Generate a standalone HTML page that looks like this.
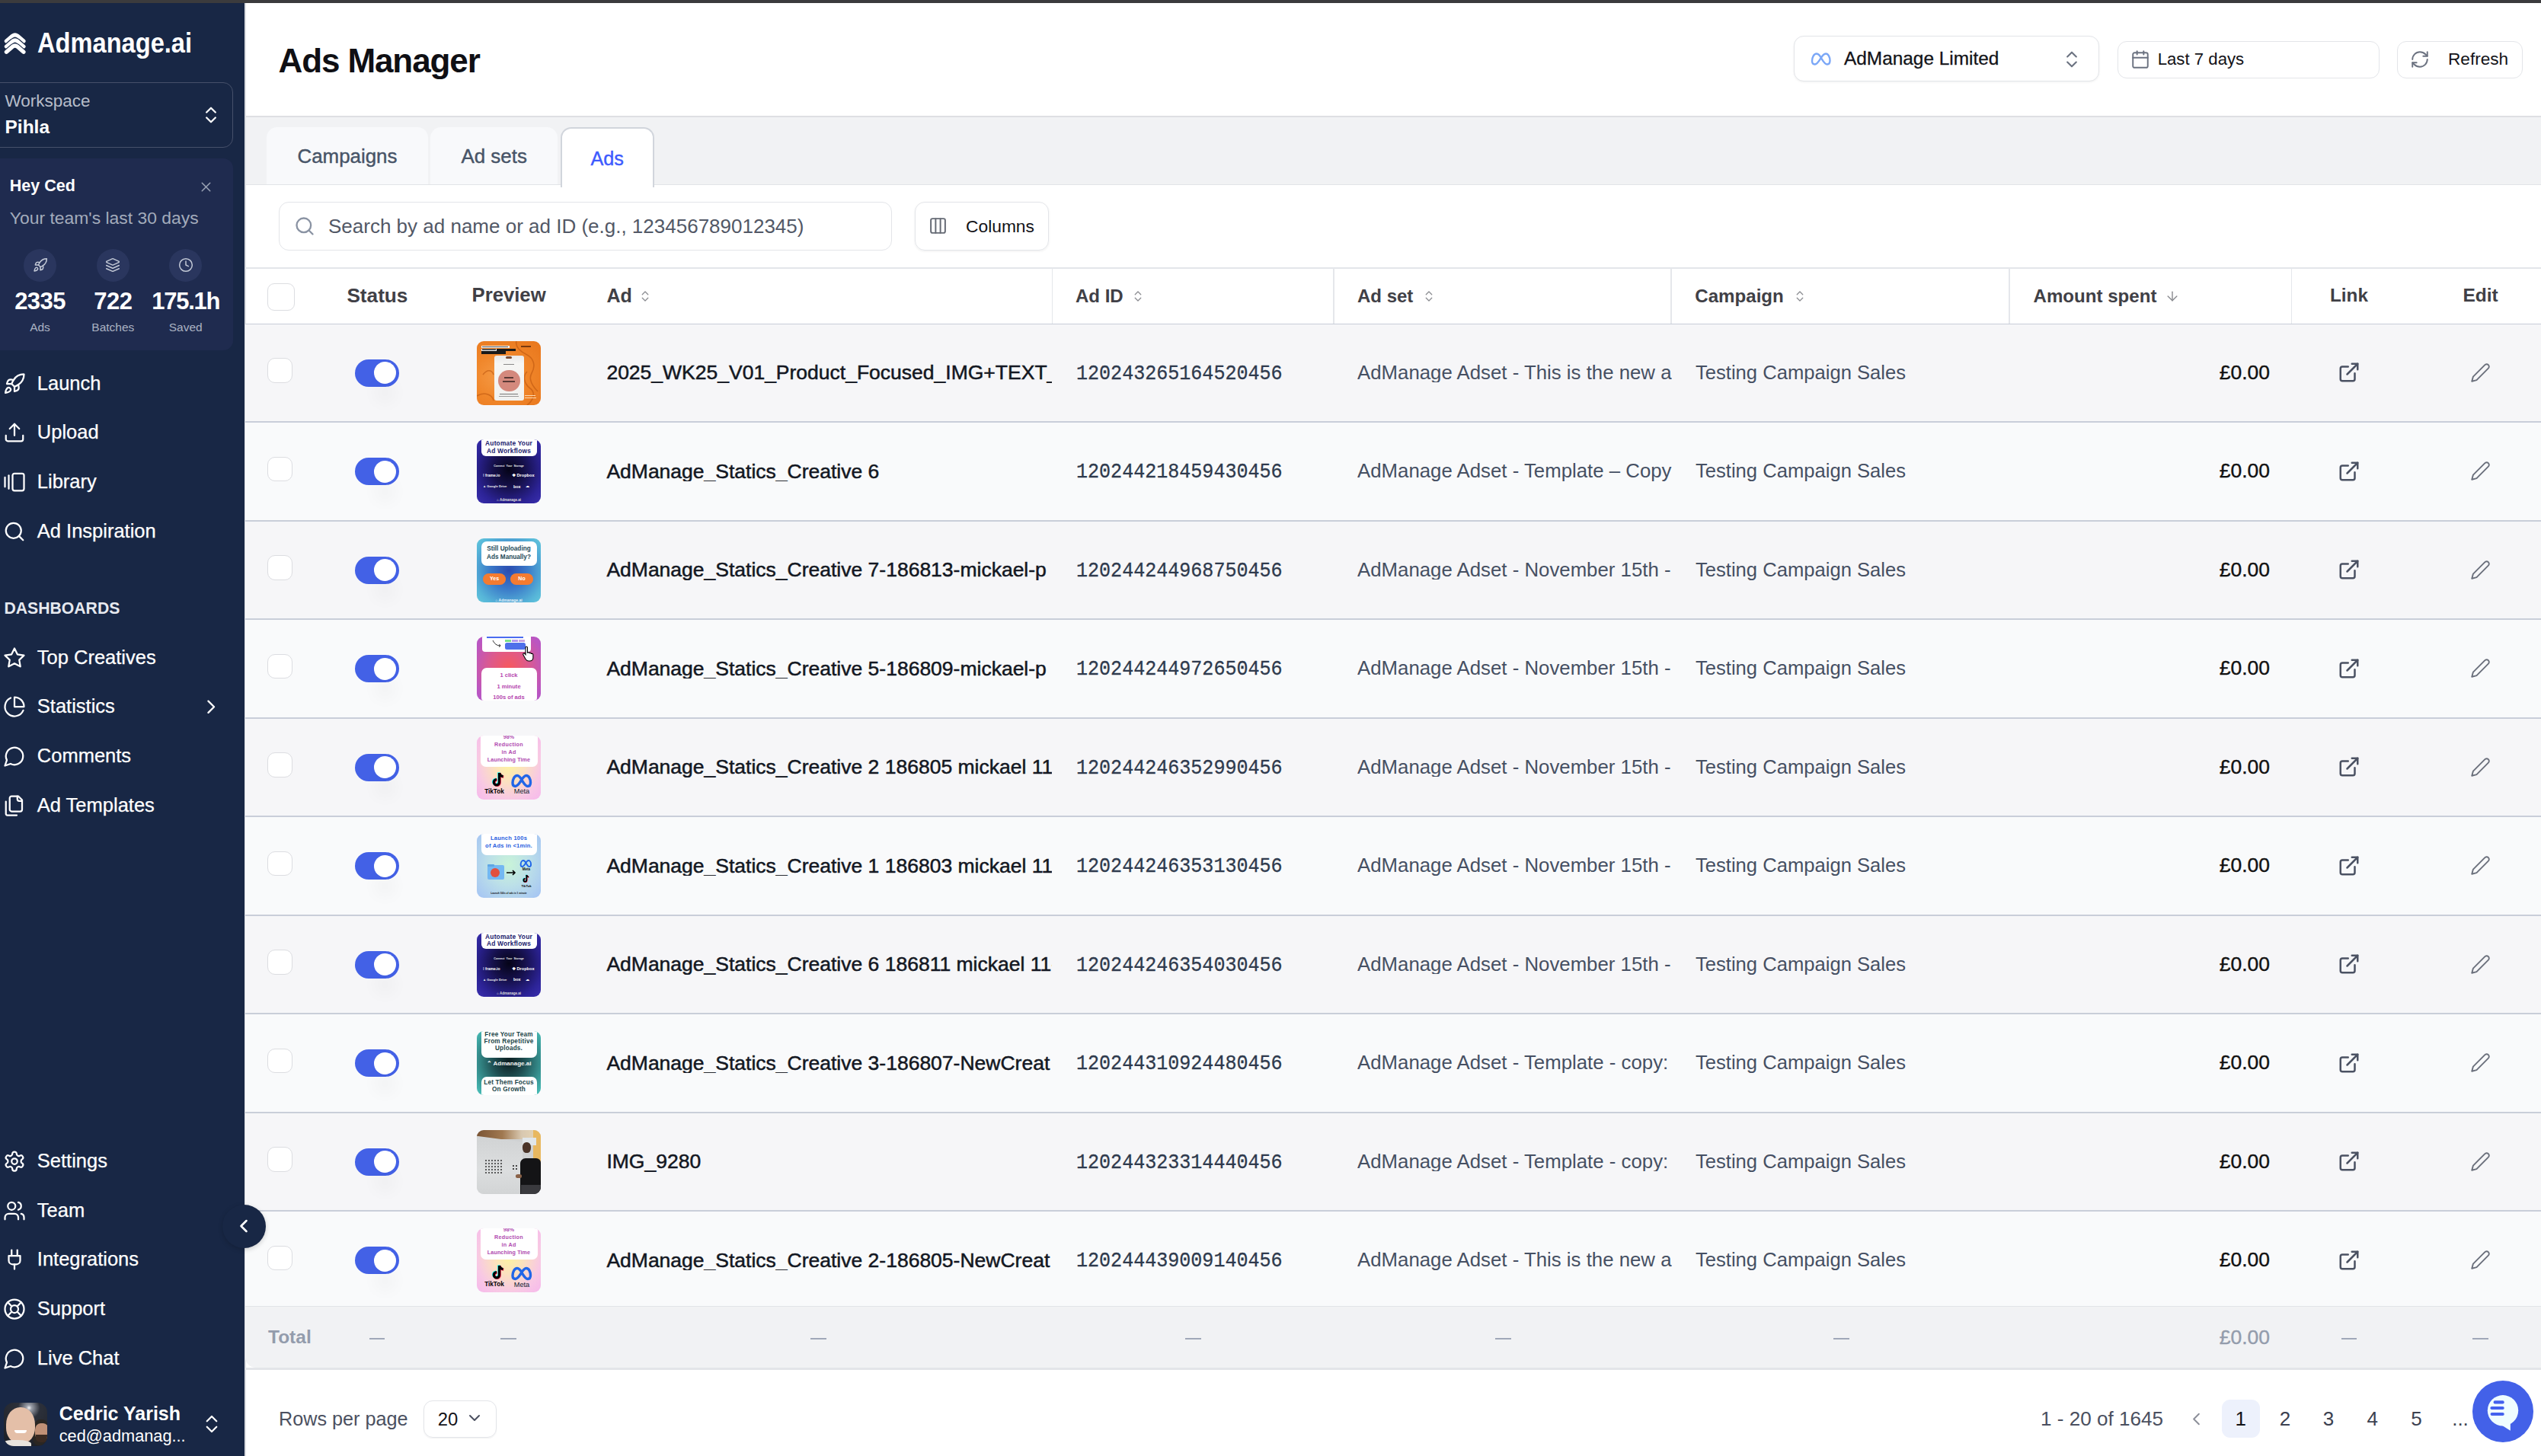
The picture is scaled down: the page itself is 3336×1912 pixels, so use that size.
<!DOCTYPE html><html><head><meta charset="utf-8"><style>
html,body{margin:0;padding:0;}
body{width:3336px;height:1912px;position:relative;overflow:hidden;background:#fff;font-family:'Liberation Sans', sans-serif;}
.t{position:absolute;line-height:1;white-space:nowrap;}
body{-webkit-font-smoothing:antialiased;}
svg{display:block}
</style></head><body>
<div style="position:absolute;left:0px;top:0px;width:3336px;height:4px;background:#3b3b3d;"></div>
<div style="position:absolute;left:0px;top:4px;width:321px;height:1908px;background:#182745;"></div>
<div style="position:absolute;left:321px;top:4px;width:2px;height:1908px;background:#dcdee2;"></div>
<svg style="position:absolute;left:5px;top:41px" width="32" height="34" viewBox="0 0 32 34" fill="none" stroke-linecap="round" stroke-linejoin="round"><path d="M3.4 13.0 L11.5 6.0 Q14.7 3.6 17.9 6.0 L26 13.0" stroke="#fff" stroke-width="5.2"/><path d="M3.4 20.1 L11.5 13.1 Q14.7 10.7 17.9 13.1 L26 20.1" stroke="#182745" stroke-width="7.4"/><path d="M3.4 20.1 L11.5 13.1 Q14.7 10.7 17.9 13.1 L26 20.1" stroke="#fff" stroke-width="5.2"/><path d="M3.4 27.2 L11.5 20.2 Q14.7 17.8 17.9 20.2 L26 27.2" stroke="#182745" stroke-width="7.4"/><path d="M3.4 27.2 L11.5 20.2 Q14.7 17.8 17.9 20.2 L26 27.2" stroke="#fff" stroke-width="5.2"/></svg>
<div class="t" style="left:48.7px;top:38.3px;font-size:37.5px;color:#fff;font-weight:700;font-family:'Liberation Sans', sans-serif;transform:scaleX(0.87);transform-origin:0 0;letter-spacing:0px;">Admanage.ai</div>
<div style="position:absolute;left:-20px;top:108px;width:326px;height:86px;border:1.5px solid #46506a;border-radius:13px;box-sizing:border-box;"></div>
<div class="t" style="left:6.5px;top:122.0px;font-size:22.5px;color:#b7bdc9;font-weight:400;font-family:'Liberation Sans', sans-serif;">Workspace</div>
<div class="t" style="left:6.5px;top:154.8px;font-size:24.5px;color:#fff;font-weight:700;font-family:'Liberation Sans', sans-serif;">Pihla</div>
<svg style="position:absolute;left:262.5px;top:136.5px;" width="28" height="28" viewBox="0 0 24 24" fill="none" stroke="#fff" stroke-width="1.9" stroke-linecap="round" stroke-linejoin="round"><path d="m7 15 5 5 5-5"/><path d="m7 9 5-5 5 5"/></svg>
<div style="position:absolute;left:-20px;top:208px;width:326px;height:252px;background:#1f2b4f;border-radius:13px;"></div>
<div class="t" style="left:12.8px;top:234.2px;font-size:21.5px;color:#fff;font-weight:700;font-family:'Liberation Sans', sans-serif;">Hey Ced</div>
<svg style="position:absolute;left:259.5px;top:235px;" width="21" height="21" viewBox="0 0 24 24" fill="none" stroke="#9aa3b5" stroke-width="1.7" stroke-linecap="round" stroke-linejoin="round"><path d="M18 6 6 18"/><path d="m6 6 12 12"/></svg>
<div class="t" style="left:12.8px;top:274.6px;font-size:22.9px;color:#a3abbb;font-weight:400;font-family:'Liberation Sans', sans-serif;">Your team's last 30 days</div>
<div style="position:absolute;left:31.0px;top:326.5px;width:43px;height:43px;background:#2a365e;border-radius:50%;"></div>
<svg style="position:absolute;left:42.5px;top:338px;" width="20" height="20" viewBox="0 0 24 24" fill="none" stroke="#c3c9d6" stroke-width="1.8" stroke-linecap="round" stroke-linejoin="round"><path d="M4.5 16.5c-1.5 1.26-2 5-2 5s3.74-.5 5-2c.71-.84.7-2.13-.09-2.91a2.18 2.18 0 0 0-2.91-.09z"/><path d="m12 15-3-3a22 22 0 0 1 2-3.95A12.88 12.88 0 0 1 22 2c0 2.72-.78 7.5-6 11a22.350 22.350 0 0 1-4 2z"/><path d="M9 12H4s.55-3.03 2-4c1.62-1.08 5 0 5 0"/><path d="M12 15v5s3.030-.55 4-2c1.08-1.62 0-5 0-5"/></svg>
<div class="t" style="left:-147.5px;width:400px;text-align:center;top:379.8px;font-size:31px;color:#fff;font-weight:700;font-family:'Liberation Sans', sans-serif;letter-spacing:-0.6px;">2335</div>
<div class="t" style="left:-147.5px;width:400px;text-align:center;top:421.6px;font-size:15.5px;color:#aab2c2;font-weight:400;font-family:'Liberation Sans', sans-serif;">Ads</div>
<div style="position:absolute;left:126.80000000000001px;top:326.5px;width:43px;height:43px;background:#2a365e;border-radius:50%;"></div>
<svg style="position:absolute;left:138.3px;top:338px;" width="20" height="20" viewBox="0 0 24 24" fill="none" stroke="#c3c9d6" stroke-width="1.8" stroke-linecap="round" stroke-linejoin="round"><path d="m12.83 2.18a2 2 0 0 0-1.66 0L2.6 6.08a1 1 0 0 0 0 1.83l8.58 3.91a2 2 0 0 0 1.66 0l8.58-3.9a1 1 0 0 0 0-1.83Z"/><path d="m22 17.65-9.17 4.16a2 2 0 0 1-1.66 0L2 17.65"/><path d="m22 12.65-9.17 4.16a2 2 0 0 1-1.66 0L2 12.65"/></svg>
<div class="t" style="left:-51.7px;width:400px;text-align:center;top:379.8px;font-size:31px;color:#fff;font-weight:700;font-family:'Liberation Sans', sans-serif;letter-spacing:-0.6px;">722</div>
<div class="t" style="left:-51.7px;width:400px;text-align:center;top:421.6px;font-size:15.5px;color:#aab2c2;font-weight:400;font-family:'Liberation Sans', sans-serif;">Batches</div>
<div style="position:absolute;left:222.2px;top:326.5px;width:43px;height:43px;background:#2a365e;border-radius:50%;"></div>
<svg style="position:absolute;left:233.7px;top:338px;" width="20" height="20" viewBox="0 0 24 24" fill="none" stroke="#c3c9d6" stroke-width="1.8" stroke-linecap="round" stroke-linejoin="round"><circle cx="12" cy="12" r="10"/><polyline points="12 6 12 12 16 14"/></svg>
<div class="t" style="left:43.7px;width:400px;text-align:center;top:379.8px;font-size:31px;color:#fff;font-weight:700;font-family:'Liberation Sans', sans-serif;letter-spacing:-1.3px;">175.1h</div>
<div class="t" style="left:43.7px;width:400px;text-align:center;top:421.6px;font-size:15.5px;color:#aab2c2;font-weight:400;font-family:'Liberation Sans', sans-serif;">Saved</div>
<svg style="position:absolute;left:4px;top:489px;" width="30" height="30" viewBox="0 0 24 24" fill="none" stroke="#fff" stroke-width="1.8" stroke-linecap="round" stroke-linejoin="round"><path d="M4.5 16.5c-1.5 1.26-2 5-2 5s3.74-.5 5-2c.71-.84.7-2.13-.09-2.91a2.18 2.18 0 0 0-2.91-.09z"/><path d="m12 15-3-3a22 22 0 0 1 2-3.95A12.88 12.88 0 0 1 22 2c0 2.72-.78 7.5-6 11a22.350 22.350 0 0 1-4 2z"/><path d="M9 12H4s.55-3.03 2-4c1.62-1.08 5 0 5 0"/><path d="M12 15v5s3.030-.55 4-2c1.08-1.62 0-5 0-5"/></svg>
<div class="t" style="left:48.8px;top:491.4px;font-size:25.5px;color:#fff;font-weight:400;font-family:'Liberation Sans', sans-serif;-webkit-text-stroke:0.25px #fff;">Launch</div>
<svg style="position:absolute;left:4px;top:553px;" width="30" height="30" viewBox="0 0 24 24" fill="none" stroke="#fff" stroke-width="1.8" stroke-linecap="round" stroke-linejoin="round"><path d="M21 15v4a2 2 0 0 1-2 2H5a2 2 0 0 1-2-2v-4"/><polyline points="17 8 12 3 7 8"/><line x1="12" y1="3" x2="12" y2="15"/></svg>
<div class="t" style="left:48.8px;top:555.4px;font-size:25.5px;color:#fff;font-weight:400;font-family:'Liberation Sans', sans-serif;-webkit-text-stroke:0.25px #fff;">Upload</div>
<svg style="position:absolute;left:4px;top:618px;" width="30" height="30" viewBox="0 0 24 24" fill="none" stroke="#fff" stroke-width="1.8" stroke-linecap="round" stroke-linejoin="round"><path d="M2 7v10"/><path d="M6 5v14"/><rect x="10" y="3" width="12" height="18" rx="2"/></svg>
<div class="t" style="left:48.8px;top:620.4px;font-size:25.5px;color:#fff;font-weight:400;font-family:'Liberation Sans', sans-serif;-webkit-text-stroke:0.25px #fff;">Library</div>
<svg style="position:absolute;left:4px;top:683px;" width="30" height="30" viewBox="0 0 24 24" fill="none" stroke="#fff" stroke-width="1.8" stroke-linecap="round" stroke-linejoin="round"><circle cx="11" cy="11" r="8"/><path d="m21 21-4.3-4.3"/></svg>
<div class="t" style="left:48.8px;top:685.4px;font-size:25.5px;color:#fff;font-weight:400;font-family:'Liberation Sans', sans-serif;-webkit-text-stroke:0.25px #fff;">Ad Inspiration</div>
<svg style="position:absolute;left:4px;top:848.5px;" width="30" height="30" viewBox="0 0 24 24" fill="none" stroke="#fff" stroke-width="1.8" stroke-linecap="round" stroke-linejoin="round"><polygon points="12 2 15.09 8.26 22 9.27 17 14.14 18.18 21.02 12 17.77 5.82 21.02 7 14.14 2 9.27 8.91 8.26 12 2"/></svg>
<div class="t" style="left:48.8px;top:850.9px;font-size:25.5px;color:#fff;font-weight:400;font-family:'Liberation Sans', sans-serif;-webkit-text-stroke:0.25px #fff;">Top Creatives</div>
<svg style="position:absolute;left:4px;top:913px;" width="30" height="30" viewBox="0 0 24 24" fill="none" stroke="#fff" stroke-width="1.8" stroke-linecap="round" stroke-linejoin="round"><path d="M21.21 15.89A10 10 0 1 1 8 2.83"/><path d="M22 12A10 10 0 0 0 12 2v10z"/></svg>
<div class="t" style="left:48.8px;top:915.4px;font-size:25.5px;color:#fff;font-weight:400;font-family:'Liberation Sans', sans-serif;-webkit-text-stroke:0.25px #fff;">Statistics</div>
<svg style="position:absolute;left:4px;top:978px;" width="30" height="30" viewBox="0 0 24 24" fill="none" stroke="#fff" stroke-width="1.8" stroke-linecap="round" stroke-linejoin="round"><path d="M7.9 20A9 9 0 1 0 4 16.1L2 22Z"/></svg>
<div class="t" style="left:48.8px;top:980.4px;font-size:25.5px;color:#fff;font-weight:400;font-family:'Liberation Sans', sans-serif;-webkit-text-stroke:0.25px #fff;">Comments</div>
<svg style="position:absolute;left:4px;top:1043px;" width="30" height="30" viewBox="0 0 24 24" fill="none" stroke="#fff" stroke-width="1.8" stroke-linecap="round" stroke-linejoin="round"><path d="M20 7h-3a2 2 0 0 1-2-2V2"/><path d="M9 18a2 2 0 0 1-2-2V4a2 2 0 0 1 2-2h7l4 4v10a2 2 0 0 1-2 2Z"/><path d="M3 7.6v12.8A1.6 1.6 0 0 0 4.6 22h9.8"/></svg>
<div class="t" style="left:48.8px;top:1045.4px;font-size:25.5px;color:#fff;font-weight:400;font-family:'Liberation Sans', sans-serif;-webkit-text-stroke:0.25px #fff;">Ad Templates</div>
<svg style="position:absolute;left:4px;top:1510px;" width="30" height="30" viewBox="0 0 24 24" fill="none" stroke="#fff" stroke-width="1.8" stroke-linecap="round" stroke-linejoin="round"><path d="M12.22 2h-.44a2 2 0 0 0-2 2v.18a2 2 0 0 1-1 1.73l-.43.25a2 2 0 0 1-2 0l-.15-.08a2 2 0 0 0-2.73.73l-.22.38a2 2 0 0 0 .73 2.73l.15.1a2 2 0 0 1 1 1.72v.51a2 2 0 0 1-1 1.74l-.15.09a2 2 0 0 0-.73 2.73l.22.38a2 2 0 0 0 2.73.73l.15-.08a2 2 0 0 1 2 0l.43.25a2 2 0 0 1 1 1.73V20a2 2 0 0 0 2 2h.44a2 2 0 0 0 2-2v-.18a2 2 0 0 1 1-1.73l.43-.25a2 2 0 0 1 2 0l.15.08a2 2 0 0 0 2.73-.73l.22-.39a2 2 0 0 0-.73-2.73l-.15-.08a2 2 0 0 1-1-1.74v-.5a2 2 0 0 1 1-1.74l.15-.09a2 2 0 0 0 .73-2.73l-.22-.38a2 2 0 0 0-2.73-.73l-.15.08a2 2 0 0 1-2 0l-.43-.25a2 2 0 0 1-1-1.73V4a2 2 0 0 0-2-2z"/><circle cx="12" cy="12" r="3"/></svg>
<div class="t" style="left:48.8px;top:1512.4px;font-size:25.5px;color:#fff;font-weight:400;font-family:'Liberation Sans', sans-serif;-webkit-text-stroke:0.25px #fff;">Settings</div>
<svg style="position:absolute;left:4px;top:1575px;" width="30" height="30" viewBox="0 0 24 24" fill="none" stroke="#fff" stroke-width="1.8" stroke-linecap="round" stroke-linejoin="round"><path d="M16 21v-2a4 4 0 0 0-4-4H6a4 4 0 0 0-4 4v2"/><circle cx="9" cy="7" r="4"/><path d="M22 21v-2a4 4 0 0 0-3-3.87"/><path d="M16 3.13a4 4 0 0 1 0 7.75"/></svg>
<div class="t" style="left:48.8px;top:1577.4px;font-size:25.5px;color:#fff;font-weight:400;font-family:'Liberation Sans', sans-serif;-webkit-text-stroke:0.25px #fff;">Team</div>
<svg style="position:absolute;left:4px;top:1639px;" width="30" height="30" viewBox="0 0 24 24" fill="none" stroke="#fff" stroke-width="1.8" stroke-linecap="round" stroke-linejoin="round"><path d="M12 22v-5"/><path d="M9 8V2"/><path d="M15 8V2"/><path d="M18 8v5a4 4 0 0 1-4 4h-4a4 4 0 0 1-4-4V8Z"/></svg>
<div class="t" style="left:48.8px;top:1641.4px;font-size:25.5px;color:#fff;font-weight:400;font-family:'Liberation Sans', sans-serif;-webkit-text-stroke:0.25px #fff;">Integrations</div>
<svg style="position:absolute;left:4px;top:1704px;" width="30" height="30" viewBox="0 0 24 24" fill="none" stroke="#fff" stroke-width="1.8" stroke-linecap="round" stroke-linejoin="round"><circle cx="12" cy="12" r="10"/><path d="m4.93 4.93 4.24 4.24"/><path d="m14.83 9.17 4.24-4.24"/><path d="m14.83 14.83 4.24 4.24"/><path d="m9.17 14.83-4.24 4.24"/><circle cx="12" cy="12" r="4"/></svg>
<div class="t" style="left:48.8px;top:1706.4px;font-size:25.5px;color:#fff;font-weight:400;font-family:'Liberation Sans', sans-serif;-webkit-text-stroke:0.25px #fff;">Support</div>
<svg style="position:absolute;left:4px;top:1768.5px;" width="30" height="30" viewBox="0 0 24 24" fill="none" stroke="#fff" stroke-width="1.8" stroke-linecap="round" stroke-linejoin="round"><path d="M7.9 20A9 9 0 1 0 4 16.1L2 22Z"/></svg>
<div class="t" style="left:48.8px;top:1770.9px;font-size:25.5px;color:#fff;font-weight:400;font-family:'Liberation Sans', sans-serif;-webkit-text-stroke:0.25px #fff;">Live Chat</div>
<div class="t" style="left:5.5px;top:788.1px;font-size:21.2px;color:#e6e9ef;font-weight:700;font-family:'Liberation Sans', sans-serif;">DASHBOARDS</div>
<svg style="position:absolute;left:262.2px;top:913.3px;" width="30.5" height="30.5" viewBox="0 0 24 24" fill="none" stroke="#fff" stroke-width="1.8" stroke-linecap="round" stroke-linejoin="round"><path d="m9 18 6-6-6-6"/></svg>
<div style="position:absolute;left:5px;top:1842px;width:57px;height:57px;border-radius:13px;overflow:hidden;background:radial-gradient(circle at 58% 12%,#f4f4f4 0,#9a9ea8 6%,#2c303a 24%,#1a1d24 100%);"><div style="position:absolute;left:38px;top:22px;width:22px;height:34px;border-radius:45% 45% 30% 30%;background:#2a2622;"></div><div style="position:absolute;left:41px;top:27px;width:18px;height:22px;border-radius:40%;background:#c09076;"></div><div style="position:absolute;left:42px;top:42px;width:16px;height:10px;border-radius:0 0 45% 45%;background:#3a2a22;"></div><div style="position:absolute;left:3px;top:6px;width:38px;height:47px;border-radius:48% 48% 42% 42%;background:#e4bfa8;"></div><div style="position:absolute;left:14px;top:36px;width:16px;height:4px;border-radius:0 0 8px 8px;background:#fff;"></div><div style="position:absolute;left:0;top:49px;width:36px;height:10px;background:#e8e4de;border-radius:30% 50% 0 0;"></div></div>
<div class="t" style="left:77.7px;top:1843.5px;font-size:25px;color:#fff;font-weight:700;font-family:'Liberation Sans', sans-serif;">Cedric Yarish</div>
<div class="t" style="left:77.7px;top:1874.6px;font-size:21.75px;color:#fff;font-weight:400;font-family:'Liberation Sans', sans-serif;">ced@admanag...</div>
<svg style="position:absolute;left:263px;top:1855px;" width="30" height="30" viewBox="0 0 24 24" fill="none" stroke="#fff" stroke-width="1.8" stroke-linecap="round" stroke-linejoin="round"><path d="m7 15 5 5 5-5"/><path d="m7 9 5-5 5 5"/></svg>
<div class="t" style="left:365.5px;top:57.8px;font-size:44px;color:#0f0f14;font-weight:700;font-family:'Liberation Sans', sans-serif;letter-spacing:-1.1px;">Ads Manager</div>
<div style="position:absolute;left:2355px;top:47px;width:401px;height:60px;border:1.5px solid #e3e5e9;border-radius:13px;box-sizing:border-box;box-shadow:0 1px 3px rgba(0,0,0,0.06);background:#fff;"></div>
<svg style="position:absolute;left:2376px;top:67px;" width="30" height="21" viewBox="0 0 29 21" fill="none" stroke="#7ba7f7" stroke-width="2.4" stroke-linecap="round" stroke-linejoin="round"><path d="M8.5 3.5C4.8 3.5 2.5 8.5 2.5 13c0 2.6 1.3 4.5 3.6 4.5 2.8 0 4.6-2.6 7.4-7.3 2.6-4.4 4.4-6.7 7-6.7 3.3 0 5.5 4.6 5.5 9 0 2.9-1.3 5-3.6 5-2.6 0-4.3-2.3-7.2-7.2C12.8 5.8 11.2 3.5 8.5 3.5Z"/></svg>
<div class="t" style="left:2421.0px;top:65.4px;font-size:24.4px;color:#131318;font-weight:400;font-family:'Liberation Sans', sans-serif;-webkit-text-stroke:0.3px #131318;">AdManage Limited</div>
<svg style="position:absolute;left:2706px;top:64px;" width="28" height="28" viewBox="0 0 24 24" fill="none" stroke="#6b7280" stroke-width="1.8" stroke-linecap="round" stroke-linejoin="round"><path d="m7 15 5 5 5-5"/><path d="m7 9 5-5 5 5"/></svg>
<div style="position:absolute;left:2779.5px;top:53.5px;width:344px;height:49px;border:1.5px solid #e3e5e9;border-radius:12px;box-sizing:border-box;background:#fff;"></div>
<svg style="position:absolute;left:2797px;top:65px;" width="26" height="26" viewBox="0 0 24 24" fill="none" stroke="#6b7280" stroke-width="1.8" stroke-linecap="round" stroke-linejoin="round"><rect x="3" y="4" width="18" height="18" rx="2"/><path d="M16 2v4"/><path d="M8 2v4"/><path d="M3 10h18"/></svg>
<div class="t" style="left:2832.7px;top:67.0px;font-size:22.2px;color:#131318;font-weight:400;font-family:'Liberation Sans', sans-serif;">Last 7 days</div>
<div style="position:absolute;left:3146.7px;top:53.5px;width:165.5px;height:49px;border:1.5px solid #e3e5e9;border-radius:12px;box-sizing:border-box;background:#fff;"></div>
<svg style="position:absolute;left:3164px;top:65px;" width="26" height="26" viewBox="0 0 24 24" fill="none" stroke="#6b7280" stroke-width="1.8" stroke-linecap="round" stroke-linejoin="round"><path d="M3 12a9 9 0 0 1 9-9 9.75 9.75 0 0 1 6.74 2.74L21 8"/><path d="M21 3v5h-5"/><path d="M21 12a9 9 0 0 1-9 9 9.75 9.75 0 0 1-6.74-2.74L3 16"/><path d="M8 16H3v5"/></svg>
<div class="t" style="left:3214.0px;top:66.7px;font-size:22.6px;color:#131318;font-weight:400;font-family:'Liberation Sans', sans-serif;">Refresh</div>
<div style="position:absolute;left:323px;top:152px;width:3013px;height:90px;background:#f1f2f4;"></div>
<div style="position:absolute;left:323px;top:151.5px;width:3013px;height:2px;background:#dedfe3;"></div>
<div style="position:absolute;left:323px;top:241.5px;width:3013px;height:1.5px;background:#e2e4e8;"></div>
<div style="position:absolute;left:350px;top:167px;width:212px;height:74.5px;background:#f8f9fb;border-radius:14px 14px 0 0;"></div>
<div style="position:absolute;left:565px;top:167px;width:167px;height:74.5px;background:#f8f9fb;border-radius:14px 14px 0 0;"></div>
<div style="position:absolute;left:735.5px;top:167px;width:123px;height:79px;background:#fff;border:2.8px solid #d1d5dc;border-bottom:none;border-radius:14px 14px 0 0;box-sizing:border-box;"></div>
<div class="t" style="left:390.5px;top:193.1px;font-size:25.9px;color:#475467;font-weight:400;font-family:'Liberation Sans', sans-serif;-webkit-text-stroke:0.4px #475467;">Campaigns</div>
<div class="t" style="left:605.5px;top:193.1px;font-size:25.9px;color:#475467;font-weight:400;font-family:'Liberation Sans', sans-serif;-webkit-text-stroke:0.4px #475467;">Ad sets</div>
<div class="t" style="left:775.5px;top:195.7px;font-size:25.2px;color:#3d5afe;font-weight:400;font-family:'Liberation Sans', sans-serif;-webkit-text-stroke:0.4px #3d5afe;">Ads</div>
<div style="position:absolute;left:365.5px;top:265px;width:805px;height:63.5px;border:1.5px solid #e3e5e9;border-radius:13px;box-sizing:border-box;"></div>
<svg style="position:absolute;left:386px;top:283px;" width="28" height="28" viewBox="0 0 24 24" fill="none" stroke="#8a93a3" stroke-width="2" stroke-linecap="round" stroke-linejoin="round"><circle cx="11" cy="11" r="8"/><path d="m21 21-4.3-4.3"/></svg>
<div class="t" style="left:431.0px;top:284.3px;font-size:26px;color:#525866;font-weight:400;font-family:'Liberation Sans', sans-serif;">Search by ad name or ad ID (e.g., 123456789012345)</div>
<div style="position:absolute;left:1200.5px;top:265px;width:176.5px;height:63.5px;border:1.5px solid #e3e5e9;border-radius:13px;box-sizing:border-box;box-shadow:0 1px 3px rgba(0,0,0,0.07);"></div>
<svg style="position:absolute;left:1219px;top:284px;" width="25" height="25" viewBox="0 0 24 24" fill="none" stroke="#666b75" stroke-width="1.9" stroke-linecap="round" stroke-linejoin="round"><rect x="3" y="3" width="18" height="18" rx="2"/><path d="M9 3v18"/><path d="M15 3v18"/></svg>
<div class="t" style="left:1268.0px;top:285.7px;font-size:22.8px;color:#131318;font-weight:400;font-family:'Liberation Sans', sans-serif;">Columns</div>
<div style="position:absolute;left:322px;top:351px;width:3014px;height:1.5px;background:#e3e6ea;"></div>
<div style="position:absolute;left:322px;top:424.5px;width:3014px;height:2.5px;background:#c8cdd8;"></div>
<div style="position:absolute;left:1380.6px;top:352px;width:1.5px;height:72.5px;background:#e5e7eb;"></div>
<div style="position:absolute;left:1750px;top:352px;width:1.5px;height:72.5px;background:#e5e7eb;"></div>
<div style="position:absolute;left:2193.2px;top:352px;width:1.5px;height:72.5px;background:#e5e7eb;"></div>
<div style="position:absolute;left:2637.4px;top:352px;width:1.5px;height:72.5px;background:#e5e7eb;"></div>
<div style="position:absolute;left:3007.7px;top:352px;width:1.5px;height:72.5px;background:#e5e7eb;"></div>
<div style="position:absolute;left:351px;top:372px;width:36px;height:36px;border:1.5px solid #dcdde1;border-radius:9px;box-sizing:border-box;background:#fff;"></div>
<div class="t" style="left:455.4px;top:374.8px;font-size:26.2px;color:#404046;font-weight:700;font-family:'Liberation Sans', sans-serif;">Status</div>
<div class="t" style="left:619.5px;top:375.2px;font-size:25.7px;color:#404046;font-weight:700;font-family:'Liberation Sans', sans-serif;">Preview</div>
<div class="t" style="left:796.4px;top:375.8px;font-size:25px;color:#404046;font-weight:700;font-family:'Liberation Sans', sans-serif;">Ad</div>
<svg style="position:absolute;left:838px;top:380px;" width="18" height="18" viewBox="0 0 24 24" fill="none" stroke="#8a8b90" stroke-width="1.7" stroke-linecap="round" stroke-linejoin="round"><path d="m7 15 5 5 5-5"/><path d="m7 9 5-5 5 5"/></svg>
<div class="t" style="left:1412.0px;top:376.7px;font-size:24px;color:#404046;font-weight:700;font-family:'Liberation Sans', sans-serif;">Ad ID</div>
<svg style="position:absolute;left:1485px;top:380px;" width="18" height="18" viewBox="0 0 24 24" fill="none" stroke="#8a8b90" stroke-width="1.7" stroke-linecap="round" stroke-linejoin="round"><path d="m7 15 5 5 5-5"/><path d="m7 9 5-5 5 5"/></svg>
<div class="t" style="left:1782.0px;top:376.7px;font-size:24px;color:#404046;font-weight:700;font-family:'Liberation Sans', sans-serif;">Ad set</div>
<svg style="position:absolute;left:1867px;top:380px;" width="18" height="18" viewBox="0 0 24 24" fill="none" stroke="#8a8b90" stroke-width="1.7" stroke-linecap="round" stroke-linejoin="round"><path d="m7 15 5 5 5-5"/><path d="m7 9 5-5 5 5"/></svg>
<div class="t" style="left:2225.3px;top:376.6px;font-size:24.1px;color:#404046;font-weight:700;font-family:'Liberation Sans', sans-serif;">Campaign</div>
<svg style="position:absolute;left:2354px;top:380px;" width="18" height="18" viewBox="0 0 24 24" fill="none" stroke="#8a8b90" stroke-width="1.7" stroke-linecap="round" stroke-linejoin="round"><path d="m7 15 5 5 5-5"/><path d="m7 9 5-5 5 5"/></svg>
<div class="t" style="left:2669.5px;top:376.6px;font-size:24.1px;color:#404046;font-weight:700;font-family:'Liberation Sans', sans-serif;">Amount spent</div>
<svg style="position:absolute;left:2842px;top:379px;" width="20" height="20" viewBox="0 0 24 24" fill="none" stroke="#8a8b90" stroke-width="1.7" stroke-linecap="round" stroke-linejoin="round"><path d="M12 5v14"/><path d="m19 12-7 7-7-7"/></svg>
<div class="t" style="left:3059.0px;top:376.4px;font-size:24.3px;color:#404046;font-weight:700;font-family:'Liberation Sans', sans-serif;">Link</div>
<div class="t" style="left:3233.5px;top:376.3px;font-size:24.5px;color:#404046;font-weight:700;font-family:'Liberation Sans', sans-serif;">Edit</div>
<div style="position:absolute;left:322px;top:425.5px;width:3014px;height:128px;background:#f6f6f8;"></div>
<div style="position:absolute;left:322px;top:553.0px;width:3014px;height:2px;background:#c9ced9;"></div>
<div style="position:absolute;left:351px;top:470.0px;width:32.5px;height:32.5px;border:1.5px solid #dcdde1;border-radius:10px;box-sizing:border-box;background:#fff;"></div>
<div style="position:absolute;left:466px;top:471.5px;width:58px;height:36px;background:#4361e6;border-radius:18px;"></div>
<div style="position:absolute;left:491.2px;top:475.3px;width:29px;height:29px;background:#fff;border-radius:50%;box-shadow:0 26px 22px -2px rgba(0,0,0,0.045);"></div>
<div style="position:absolute;left:626px;top:447.8px;width:84px;height:84px;border-radius:9px;overflow:hidden;background:radial-gradient(ellipse at 35% 55%,#f59a45 0%,#f0862a 45%,#e8761c 100%);"><svg style="position:absolute;left:0;top:0" width="84" height="84" viewBox="0 0 84 84" fill="none" stroke="#b8520c" stroke-opacity="0.55" stroke-width="1.6"><path d="M52 0c-2 8 6 14 14 18s12 14 6 24c-5 9 2 18 8 24"/><path d="M66 40c-6 6-4 16 4 22s4 16-4 22"/><path d="M0 72c10-6 20-2 22 6"/><path d="M8 44c6-8 12-6 14 0"/></svg><div style="position:absolute;left:6px;top:6.4px;width:37px;height:3.2px;background:#f4f4f4;"></div><div style="position:absolute;left:6px;top:9.8px;width:20px;height:3.6px;background:#ededed;"></div><div style="position:absolute;left:26px;top:9.8px;width:25px;height:3.6px;background:#1a1a1a;"></div><div style="position:absolute;left:6px;top:13.6px;width:32px;height:3.4px;background:#1a1a1a;"></div><div style="position:absolute;left:7px;top:7px;width:34px;height:1.6px;background:#555;"></div><div style="position:absolute;left:7px;top:10.6px;width:18px;height:1.6px;background:#555;"></div><div style="position:absolute;left:58px;top:6.5px;width:13px;height:1.5px;background:#7a3a10;"></div><div style="position:absolute;left:23px;top:19px;width:38.5px;height:59px;background:linear-gradient(#e9e9e9 0,#f6f6f4 18%,#f1f1ef 100%);border-radius:3px;"></div><div style="position:absolute;left:38px;top:20.5px;width:8px;height:3px;background:#7a4a30;border-radius:2px;"></div><div style="position:absolute;left:35px;top:30px;width:14px;height:1.4px;background:#888;"></div><div style="position:absolute;left:28px;top:38px;width:28.5px;height:28.5px;background:#d4897d;border-radius:50%;"></div><div style="position:absolute;left:36px;top:47px;width:12px;height:1.8px;background:#5a3a36;"></div><div style="position:absolute;left:34px;top:52px;width:16px;height:1.8px;background:#5a3a36;"></div><div style="position:absolute;left:30px;top:69px;width:24px;height:1.4px;background:#777;"></div><div style="position:absolute;left:29px;top:72px;width:26px;height:1px;background:#999;"></div><div style="position:absolute;left:63px;top:71px;width:14px;height:1.4px;background:#ffd9b0;"></div><div style="position:absolute;left:63px;top:74px;width:15px;height:1.4px;background:#ffd9b0;"></div></div>
<div class="t" style="left:796.4px;top:476.1px;font-size:26.5px;color:#131722;font-weight:400;font-family:'Liberation Sans', sans-serif;width:585px;overflow:hidden;-webkit-text-stroke:0.5px #131722;">2025_WK25_V01_Product_Focused_IMG+TEXT_Cards</div>
<div class="t" style="left:1413.0px;top:476.8px;font-size:27.5px;color:#2f3a4d;font-weight:400;font-family:'Liberation Mono', monospace;transform:scaleX(0.911);transform-origin:0 0;-webkit-text-stroke:0.3px #2f3a4d;">120243265164520456</div>
<div class="t" style="left:1782.0px;top:476.7px;font-size:25.8px;color:#465063;font-weight:400;font-family:'Liberation Sans', sans-serif;width:413px;overflow:hidden;">AdManage Adset - This is the new ad set</div>
<div class="t" style="left:2226.0px;top:476.8px;font-size:25.6px;color:#465063;font-weight:400;font-family:'Liberation Sans', sans-serif;">Testing Campaign Sales</div>
<div class="t" style="right:356.0px;top:475.8px;font-size:26.5px;color:#111;font-weight:400;font-family:'Liberation Sans', sans-serif;-webkit-text-stroke:0.35px #111;">£0.00</div>
<svg style="position:absolute;left:3069px;top:474.0px;" width="30" height="30" viewBox="0 0 24 24" fill="none" stroke="#4b5263" stroke-width="2" stroke-linecap="round" stroke-linejoin="round"><path d="M15 3h6v6"/><path d="M10 14 21 3"/><path d="M18 13v6a2 2 0 0 1-2 2H5a2 2 0 0 1-2-2V8a2 2 0 0 1 2-2h6"/></svg>
<svg style="position:absolute;left:3243px;top:475.5px;" width="27" height="27" viewBox="0 0 24 24" fill="none" stroke="#6b707c" stroke-width="1.7" stroke-linecap="round" stroke-linejoin="round"><path d="M17 3a2.85 2.83 0 1 1 4 4L7.5 20.5 2 22l1.5-5.5Z"/></svg>
<div style="position:absolute;left:322px;top:555.0px;width:3014px;height:128px;background:#f9fafb;"></div>
<div style="position:absolute;left:322px;top:682.5px;width:3014px;height:2px;background:#c9ced9;"></div>
<div style="position:absolute;left:351px;top:599.5px;width:32.5px;height:32.5px;border:1.5px solid #dcdde1;border-radius:10px;box-sizing:border-box;background:#fff;"></div>
<div style="position:absolute;left:466px;top:601.0px;width:58px;height:36px;background:#4361e6;border-radius:18px;"></div>
<div style="position:absolute;left:491.2px;top:604.8px;width:29px;height:29px;background:#fff;border-radius:50%;box-shadow:0 26px 22px -2px rgba(0,0,0,0.045);"></div>
<div style="position:absolute;left:626px;top:577.3px;width:84px;height:84px;border-radius:9px;overflow:hidden;background:radial-gradient(ellipse at 50% 48%,#050418 0%,#15104a 35%,#2c2396 75%,#3a2fb0 100%);"><div style="position:absolute;left:6px;top:-4px;width:72.5px;height:25.3px;background:#fff;border-radius:0 0 6px 6px;"></div><div style="position:absolute;left:0px;top:0.8px;width:84px;font-size:8.4px;line-height:1.0;color:#221c6e;font-weight:700;text-align:center;white-space:nowrap;font-family:'Liberation Sans', sans-serif;letter-spacing:0.2px;">Automate Your</div><div style="position:absolute;left:0px;top:10.6px;width:84px;font-size:8.4px;line-height:1.0;color:#221c6e;font-weight:700;text-align:center;white-space:nowrap;font-family:'Liberation Sans', sans-serif;letter-spacing:0.2px;">Ad Workflows</div><div style="position:absolute;left:0px;top:33.5px;width:84px;font-size:3.6px;line-height:1.0;color:#e8e8f0;font-weight:700;text-align:center;white-space:nowrap;font-family:'Liberation Sans', sans-serif;">Connect &nbsp;Your &nbsp;Storage</div><div style="position:absolute;left:8px;top:45px;width:36px;font-size:5px;line-height:1.0;color:#fff;font-weight:700;text-align:left;white-space:nowrap;font-family:'Liberation Sans', sans-serif;">⁞ frame.io</div><div style="position:absolute;left:46px;top:45px;width:36px;font-size:5.6px;line-height:1.0;color:#fff;font-weight:700;text-align:left;white-space:nowrap;font-family:'Liberation Sans', sans-serif;">❖ Dropbox</div><div style="position:absolute;left:8px;top:60px;width:40px;font-size:4.2px;line-height:1.0;color:#eee;font-weight:700;text-align:left;white-space:nowrap;font-family:'Liberation Sans', sans-serif;">▲ Google Drive</div><div style="position:absolute;left:48px;top:59.5px;width:20px;font-size:5.4px;line-height:1.0;color:#fff;font-weight:700;text-align:left;white-space:nowrap;font-family:'Liberation Sans', sans-serif;">box</div><div style="position:absolute;left:64px;top:60px;width:20px;font-size:4.5px;line-height:1.0;color:#fff;font-weight:700;text-align:left;white-space:nowrap;font-family:'Liberation Sans', sans-serif;">☁</div><div style="position:absolute;left:0px;top:78px;width:84px;font-size:4.5px;line-height:1.0;color:#ddd;font-weight:700;text-align:center;white-space:nowrap;font-family:'Liberation Sans', sans-serif;">⌂ Admanage.ai</div></div>
<div class="t" style="left:796.4px;top:605.6px;font-size:26.5px;color:#131722;font-weight:400;font-family:'Liberation Sans', sans-serif;width:585px;overflow:hidden;-webkit-text-stroke:0.5px #131722;">AdManage_Statics_Creative 6</div>
<div class="t" style="left:1413.0px;top:606.3px;font-size:27.5px;color:#2f3a4d;font-weight:400;font-family:'Liberation Mono', monospace;transform:scaleX(0.911);transform-origin:0 0;-webkit-text-stroke:0.3px #2f3a4d;">120244218459430456</div>
<div class="t" style="left:1782.0px;top:606.2px;font-size:25.8px;color:#465063;font-weight:400;font-family:'Liberation Sans', sans-serif;width:413px;overflow:hidden;">AdManage Adset - Template – Copy</div>
<div class="t" style="left:2226.0px;top:606.3px;font-size:25.6px;color:#465063;font-weight:400;font-family:'Liberation Sans', sans-serif;">Testing Campaign Sales</div>
<div class="t" style="right:356.0px;top:605.3px;font-size:26.5px;color:#111;font-weight:400;font-family:'Liberation Sans', sans-serif;-webkit-text-stroke:0.35px #111;">£0.00</div>
<svg style="position:absolute;left:3069px;top:603.5px;" width="30" height="30" viewBox="0 0 24 24" fill="none" stroke="#4b5263" stroke-width="2" stroke-linecap="round" stroke-linejoin="round"><path d="M15 3h6v6"/><path d="M10 14 21 3"/><path d="M18 13v6a2 2 0 0 1-2 2H5a2 2 0 0 1-2-2V8a2 2 0 0 1 2-2h6"/></svg>
<svg style="position:absolute;left:3243px;top:605.0px;" width="27" height="27" viewBox="0 0 24 24" fill="none" stroke="#6b707c" stroke-width="1.7" stroke-linecap="round" stroke-linejoin="round"><path d="M17 3a2.85 2.83 0 1 1 4 4L7.5 20.5 2 22l1.5-5.5Z"/></svg>
<div style="position:absolute;left:322px;top:684.5px;width:3014px;height:128px;background:#f6f6f8;"></div>
<div style="position:absolute;left:322px;top:812.0px;width:3014px;height:2px;background:#c9ced9;"></div>
<div style="position:absolute;left:351px;top:729.0px;width:32.5px;height:32.5px;border:1.5px solid #dcdde1;border-radius:10px;box-sizing:border-box;background:#fff;"></div>
<div style="position:absolute;left:466px;top:730.5px;width:58px;height:36px;background:#4361e6;border-radius:18px;"></div>
<div style="position:absolute;left:491.2px;top:734.3px;width:29px;height:29px;background:#fff;border-radius:50%;box-shadow:0 26px 22px -2px rgba(0,0,0,0.045);"></div>
<div style="position:absolute;left:626px;top:706.8px;width:84px;height:84px;border-radius:9px;overflow:hidden;background:radial-gradient(ellipse at 50% 50%,#2a4cb0 0%,#3a78c8 40%,#56b4d8 80%,#62c8dc 100%);"><div style="position:absolute;left:6px;top:4px;width:72.5px;height:32.5px;background:#fff;border-radius:7px;"></div><div style="position:absolute;left:0px;top:10px;width:84px;font-size:8.2px;line-height:1.0;color:#1e4a58;font-weight:700;text-align:center;white-space:nowrap;font-family:'Liberation Sans', sans-serif;">Still Uploading</div><div style="position:absolute;left:0px;top:21.5px;width:84px;font-size:8.2px;line-height:1.0;color:#1e4a58;font-weight:700;text-align:center;white-space:nowrap;font-family:'Liberation Sans', sans-serif;">Ads Manually?</div><div style="position:absolute;left:8px;top:46px;width:30px;height:15px;background:#f47b30;border-radius:8px;"></div><div style="position:absolute;left:44px;top:46px;width:30px;height:15px;background:#f47b30;border-radius:8px;"></div><div style="position:absolute;left:8px;top:49.5px;width:30px;font-size:7px;line-height:1.0;color:#fff;font-weight:700;text-align:center;white-space:nowrap;font-family:'Liberation Sans', sans-serif;">Yes</div><div style="position:absolute;left:44px;top:49.5px;width:30px;font-size:7px;line-height:1.0;color:#fff;font-weight:700;text-align:center;white-space:nowrap;font-family:'Liberation Sans', sans-serif;">No</div><div style="position:absolute;left:0px;top:79.5px;width:84px;font-size:5px;line-height:1.0;color:#e8f4fa;font-weight:700;text-align:center;white-space:nowrap;font-family:'Liberation Sans', sans-serif;">⌂ Admanage.ai</div></div>
<div class="t" style="left:796.4px;top:735.1px;font-size:26.5px;color:#131722;font-weight:400;font-family:'Liberation Sans', sans-serif;width:585px;overflow:hidden;-webkit-text-stroke:0.5px #131722;">AdManage_Statics_Creative 7-186813-mickael-p</div>
<div class="t" style="left:1413.0px;top:735.8px;font-size:27.5px;color:#2f3a4d;font-weight:400;font-family:'Liberation Mono', monospace;transform:scaleX(0.911);transform-origin:0 0;-webkit-text-stroke:0.3px #2f3a4d;">120244244968750456</div>
<div class="t" style="left:1782.0px;top:735.7px;font-size:25.8px;color:#465063;font-weight:400;font-family:'Liberation Sans', sans-serif;width:413px;overflow:hidden;">AdManage Adset - November 15th - 1</div>
<div class="t" style="left:2226.0px;top:735.8px;font-size:25.6px;color:#465063;font-weight:400;font-family:'Liberation Sans', sans-serif;">Testing Campaign Sales</div>
<div class="t" style="right:356.0px;top:734.8px;font-size:26.5px;color:#111;font-weight:400;font-family:'Liberation Sans', sans-serif;-webkit-text-stroke:0.35px #111;">£0.00</div>
<svg style="position:absolute;left:3069px;top:733.0px;" width="30" height="30" viewBox="0 0 24 24" fill="none" stroke="#4b5263" stroke-width="2" stroke-linecap="round" stroke-linejoin="round"><path d="M15 3h6v6"/><path d="M10 14 21 3"/><path d="M18 13v6a2 2 0 0 1-2 2H5a2 2 0 0 1-2-2V8a2 2 0 0 1 2-2h6"/></svg>
<svg style="position:absolute;left:3243px;top:734.5px;" width="27" height="27" viewBox="0 0 24 24" fill="none" stroke="#6b707c" stroke-width="1.7" stroke-linecap="round" stroke-linejoin="round"><path d="M17 3a2.85 2.83 0 1 1 4 4L7.5 20.5 2 22l1.5-5.5Z"/></svg>
<div style="position:absolute;left:322px;top:814.0px;width:3014px;height:128px;background:#f9fafb;"></div>
<div style="position:absolute;left:322px;top:941.5px;width:3014px;height:2px;background:#c9ced9;"></div>
<div style="position:absolute;left:351px;top:858.5px;width:32.5px;height:32.5px;border:1.5px solid #dcdde1;border-radius:10px;box-sizing:border-box;background:#fff;"></div>
<div style="position:absolute;left:466px;top:860.0px;width:58px;height:36px;background:#4361e6;border-radius:18px;"></div>
<div style="position:absolute;left:491.2px;top:863.8px;width:29px;height:29px;background:#fff;border-radius:50%;box-shadow:0 26px 22px -2px rgba(0,0,0,0.045);"></div>
<div style="position:absolute;left:626px;top:836.3px;width:84px;height:84px;border-radius:9px;overflow:hidden;background:radial-gradient(ellipse at 50% 48%,#f65a5e 0%,#de5a8a 40%,#bc56c0 80%,#b356c8 100%);"><div style="position:absolute;left:7px;top:0;width:64px;height:20px;background:#fff;border-radius:0 0 4px 4px;"></div><div style="position:absolute;left:13px;top:0;width:48px;height:1.4px;background:#4a6cf0;"></div><div style="position:absolute;left:37px;top:3.5px;width:8px;height:3.2px;background:#7de38a;"></div><div style="position:absolute;left:46px;top:3.5px;width:8px;height:3.2px;background:#b39af0;"></div><div style="position:absolute;left:55px;top:3.5px;width:8px;height:3.2px;background:#c9a4e0;"></div><div style="position:absolute;left:36.5px;top:8.2px;width:27px;height:8.8px;background:#4f70ea;border-radius:2.5px;"></div><svg style="position:absolute;left:20px;top:4px" width="14" height="10" viewBox="0 0 14 10"><path d="M1 1c2 4 5 7 10 7l-1.5-2M11 8l-2 1.5" fill="none" stroke="#111" stroke-width="0.9"/></svg><svg style="position:absolute;left:59px;top:11px" width="18" height="22" viewBox="0 0 18 22"><path d="M6 2c1 0 1.5.5 1.5 1.5V10l1-.5c1 0 1.5.5 1.5 1l1-.3c1 0 1.4.6 1.4 1.2l1-.2c1 0 1.5.6 1.5 1.5v4c0 2.5-2 4.3-4.5 4.3H9c-2 0-3-1-4-2.5L2 13c-.6-.8-.3-1.7.5-2 .6-.2 1.3 0 1.8.6l.7 1V3.5C5 2.5 5.3 2 6 2z" fill="#fff" stroke="#000" stroke-width="1.1"/></svg><div style="position:absolute;left:6px;top:41px;width:72.5px;height:46px;background:#fff;border-radius:7px;"></div><div style="position:absolute;left:0px;top:47px;width:84px;font-size:7.6px;line-height:1.0;color:#b648b0;font-weight:700;text-align:center;white-space:nowrap;font-family:'Liberation Sans', sans-serif;">1 click</div><div style="position:absolute;left:0px;top:61.5px;width:84px;font-size:7.6px;line-height:1.0;color:#b648b0;font-weight:700;text-align:center;white-space:nowrap;font-family:'Liberation Sans', sans-serif;">1 minute</div><div style="position:absolute;left:0px;top:76px;width:84px;font-size:7.6px;line-height:1.0;color:#b648b0;font-weight:700;text-align:center;white-space:nowrap;font-family:'Liberation Sans', sans-serif;">100s of ads</div></div>
<div class="t" style="left:796.4px;top:864.6px;font-size:26.5px;color:#131722;font-weight:400;font-family:'Liberation Sans', sans-serif;width:585px;overflow:hidden;-webkit-text-stroke:0.5px #131722;">AdManage_Statics_Creative 5-186809-mickael-p</div>
<div class="t" style="left:1413.0px;top:865.3px;font-size:27.5px;color:#2f3a4d;font-weight:400;font-family:'Liberation Mono', monospace;transform:scaleX(0.911);transform-origin:0 0;-webkit-text-stroke:0.3px #2f3a4d;">120244244972650456</div>
<div class="t" style="left:1782.0px;top:865.2px;font-size:25.8px;color:#465063;font-weight:400;font-family:'Liberation Sans', sans-serif;width:413px;overflow:hidden;">AdManage Adset - November 15th - 1</div>
<div class="t" style="left:2226.0px;top:865.3px;font-size:25.6px;color:#465063;font-weight:400;font-family:'Liberation Sans', sans-serif;">Testing Campaign Sales</div>
<div class="t" style="right:356.0px;top:864.3px;font-size:26.5px;color:#111;font-weight:400;font-family:'Liberation Sans', sans-serif;-webkit-text-stroke:0.35px #111;">£0.00</div>
<svg style="position:absolute;left:3069px;top:862.5px;" width="30" height="30" viewBox="0 0 24 24" fill="none" stroke="#4b5263" stroke-width="2" stroke-linecap="round" stroke-linejoin="round"><path d="M15 3h6v6"/><path d="M10 14 21 3"/><path d="M18 13v6a2 2 0 0 1-2 2H5a2 2 0 0 1-2-2V8a2 2 0 0 1 2-2h6"/></svg>
<svg style="position:absolute;left:3243px;top:864.0px;" width="27" height="27" viewBox="0 0 24 24" fill="none" stroke="#6b707c" stroke-width="1.7" stroke-linecap="round" stroke-linejoin="round"><path d="M17 3a2.85 2.83 0 1 1 4 4L7.5 20.5 2 22l1.5-5.5Z"/></svg>
<div style="position:absolute;left:322px;top:943.5px;width:3014px;height:128px;background:#f6f6f8;"></div>
<div style="position:absolute;left:322px;top:1071.0px;width:3014px;height:2px;background:#c9ced9;"></div>
<div style="position:absolute;left:351px;top:988.0px;width:32.5px;height:32.5px;border:1.5px solid #dcdde1;border-radius:10px;box-sizing:border-box;background:#fff;"></div>
<div style="position:absolute;left:466px;top:989.5px;width:58px;height:36px;background:#4361e6;border-radius:18px;"></div>
<div style="position:absolute;left:491.2px;top:993.3px;width:29px;height:29px;background:#fff;border-radius:50%;box-shadow:0 26px 22px -2px rgba(0,0,0,0.045);"></div>
<div style="position:absolute;left:626px;top:965.8px;width:84px;height:84px;border-radius:9px;overflow:hidden;background:radial-gradient(ellipse at 50% 45%,#fdf3a0 0%,#fbe0c0 35%,#f8c8e4 70%,#f6b8ec 100%);"><div style="position:absolute;left:4.5px;top:-4px;width:75.5px;height:45px;background:#fff;border-radius:0 0 7px 7px;"></div><div style="position:absolute;left:0px;top:-2px;width:84px;font-size:7.2px;line-height:1.0;color:#b04ab0;font-weight:700;text-align:center;white-space:nowrap;font-family:'Liberation Sans', sans-serif;">98%</div><div style="position:absolute;left:0px;top:8px;width:84px;font-size:7.2px;line-height:1.0;color:#b04ab0;font-weight:700;text-align:center;white-space:nowrap;font-family:'Liberation Sans', sans-serif;letter-spacing:0.3px;">Reduction</div><div style="position:absolute;left:0px;top:18px;width:84px;font-size:7.2px;line-height:1.0;color:#b04ab0;font-weight:700;text-align:center;white-space:nowrap;font-family:'Liberation Sans', sans-serif;letter-spacing:0.3px;">in Ad</div><div style="position:absolute;left:0px;top:28px;width:84px;font-size:7.2px;line-height:1.0;color:#b04ab0;font-weight:700;text-align:center;white-space:nowrap;font-family:'Liberation Sans', sans-serif;letter-spacing:0.1px;">Launching Time</div><svg style="position:absolute;left:18px;top:47px" width="20" height="22" viewBox="0 0 20 22"><path d="M11.5 2v12.2a3.6 3.6 0 1 1-3.6-3.6" fill="none" stroke="#25f4ee" stroke-width="3.2" transform="translate(-0.8,-0.6)"/><path d="M11.5 2c.6 2.6 2.4 4.3 5 4.6" fill="none" stroke="#25f4ee" stroke-width="3.2" transform="translate(-0.8,-0.6)"/><path d="M11.5 2v12.2a3.6 3.6 0 1 1-3.6-3.6" fill="none" stroke="#fe2c55" stroke-width="3.2" transform="translate(0.8,0.6)"/><path d="M11.5 2c.6 2.6 2.4 4.3 5 4.6" fill="none" stroke="#fe2c55" stroke-width="3.2" transform="translate(0.8,0.6)"/><path d="M11.5 2v12.2a3.6 3.6 0 1 1-3.6-3.6" fill="none" stroke="#000" stroke-width="3.2"/><path d="M11.5 2c.6 2.6 2.4 4.3 5 4.6" fill="none" stroke="#000" stroke-width="3.2"/></svg><div style="position:absolute;left:4px;top:70px;width:38px;font-size:8.2px;line-height:1.0;color:#000;font-weight:700;text-align:center;white-space:nowrap;font-family:'Liberation Sans', sans-serif;">TikTok</div><svg style="position:absolute;left:44px;top:49px" width="30" height="21" viewBox="0 0 29 21"><path d="M8.5 3.5C4.8 3.5 2.5 8.5 2.5 13c0 2.6 1.3 4.5 3.6 4.5 2.8 0 4.6-2.6 7.4-7.3 2.6-4.4 4.4-6.7 7-6.7 3.3 0 5.5 4.6 5.5 9 0 2.9-1.3 5-3.6 5-2.6 0-4.3-2.3-7.2-7.2C12.8 5.8 11.2 3.5 8.5 3.5Z" fill="none" stroke="#2166e8" stroke-width="3.4"/></svg><div style="position:absolute;left:42px;top:69.5px;width:34px;font-size:9.2px;line-height:1.0;color:#0c2230;font-weight:400;text-align:center;white-space:nowrap;font-family:'Liberation Sans', sans-serif;">Meta</div></div>
<div class="t" style="left:796.4px;top:994.1px;font-size:26.5px;color:#131722;font-weight:400;font-family:'Liberation Sans', sans-serif;width:585px;overflow:hidden;-webkit-text-stroke:0.5px #131722;">AdManage_Statics_Creative 2 186805 mickael 11-</div>
<div class="t" style="left:1413.0px;top:994.8px;font-size:27.5px;color:#2f3a4d;font-weight:400;font-family:'Liberation Mono', monospace;transform:scaleX(0.911);transform-origin:0 0;-webkit-text-stroke:0.3px #2f3a4d;">120244246352990456</div>
<div class="t" style="left:1782.0px;top:994.7px;font-size:25.8px;color:#465063;font-weight:400;font-family:'Liberation Sans', sans-serif;width:413px;overflow:hidden;">AdManage Adset - November 15th - 1</div>
<div class="t" style="left:2226.0px;top:994.8px;font-size:25.6px;color:#465063;font-weight:400;font-family:'Liberation Sans', sans-serif;">Testing Campaign Sales</div>
<div class="t" style="right:356.0px;top:993.8px;font-size:26.5px;color:#111;font-weight:400;font-family:'Liberation Sans', sans-serif;-webkit-text-stroke:0.35px #111;">£0.00</div>
<svg style="position:absolute;left:3069px;top:992.0px;" width="30" height="30" viewBox="0 0 24 24" fill="none" stroke="#4b5263" stroke-width="2" stroke-linecap="round" stroke-linejoin="round"><path d="M15 3h6v6"/><path d="M10 14 21 3"/><path d="M18 13v6a2 2 0 0 1-2 2H5a2 2 0 0 1-2-2V8a2 2 0 0 1 2-2h6"/></svg>
<svg style="position:absolute;left:3243px;top:993.5px;" width="27" height="27" viewBox="0 0 24 24" fill="none" stroke="#6b707c" stroke-width="1.7" stroke-linecap="round" stroke-linejoin="round"><path d="M17 3a2.85 2.83 0 1 1 4 4L7.5 20.5 2 22l1.5-5.5Z"/></svg>
<div style="position:absolute;left:322px;top:1073.0px;width:3014px;height:128px;background:#f9fafb;"></div>
<div style="position:absolute;left:322px;top:1200.5px;width:3014px;height:2px;background:#c9ced9;"></div>
<div style="position:absolute;left:351px;top:1117.5px;width:32.5px;height:32.5px;border:1.5px solid #dcdde1;border-radius:10px;box-sizing:border-box;background:#fff;"></div>
<div style="position:absolute;left:466px;top:1119.0px;width:58px;height:36px;background:#4361e6;border-radius:18px;"></div>
<div style="position:absolute;left:491.2px;top:1122.8px;width:29px;height:29px;background:#fff;border-radius:50%;box-shadow:0 26px 22px -2px rgba(0,0,0,0.045);"></div>
<div style="position:absolute;left:626px;top:1095.3px;width:84px;height:84px;border-radius:9px;overflow:hidden;background:radial-gradient(ellipse at 50% 48%,#c9f4d8 0%,#bce0e8 45%,#a8c8f2 90%,#a4c2f4 100%);"><div style="position:absolute;left:6px;top:-4px;width:72.5px;height:31.5px;background:#fff;border-radius:0 0 7px 7px;"></div><div style="position:absolute;left:0px;top:2px;width:84px;font-size:7.6px;line-height:1.0;color:#2c5fe0;font-weight:700;text-align:center;white-space:nowrap;font-family:'Liberation Sans', sans-serif;letter-spacing:0.2px;">Launch 100s</div><div style="position:absolute;left:0px;top:11.5px;width:84px;font-size:7.6px;line-height:1.0;color:#2c5fe0;font-weight:700;text-align:center;white-space:nowrap;font-family:'Liberation Sans', sans-serif;letter-spacing:0.2px;">of Ads in &lt;1min.</div><div style="position:absolute;left:13.5px;top:41px;width:22.5px;height:19px;background:#74b8f2;border-radius:2px;"></div><div style="position:absolute;left:13.5px;top:39.5px;width:9px;height:3px;background:#5ea6e4;border-radius:1px;"></div><div style="position:absolute;left:18px;top:45px;width:12px;height:12px;background:#e2503e;border-radius:50%;"></div><svg style="position:absolute;left:38px;top:47px" width="14" height="8" viewBox="0 0 14 8"><path d="M1 4h11M9 1l3 3-3 3" fill="none" stroke="#000" stroke-width="1.6"/></svg><svg style="position:absolute;left:56px;top:33px" width="17" height="12" viewBox="0 0 29 21"><path d="M8.5 3.5C4.8 3.5 2.5 8.5 2.5 13c0 2.6 1.3 4.5 3.6 4.5 2.8 0 4.6-2.6 7.4-7.3 2.6-4.4 4.4-6.7 7-6.7 3.3 0 5.5 4.6 5.5 9 0 2.9-1.3 5-3.6 5-2.6 0-4.3-2.3-7.2-7.2C12.8 5.8 11.2 3.5 8.5 3.5Z" fill="none" stroke="#2166e8" stroke-width="3.4"/></svg><div style="position:absolute;left:54px;top:44.5px;width:22px;font-size:4.5px;line-height:1.0;color:#111;font-weight:700;text-align:center;white-space:nowrap;font-family:'Liberation Sans', sans-serif;">Meta</div><svg style="position:absolute;left:59px;top:53px" width="11" height="12" viewBox="0 0 20 22"><path d="M11.5 2v12.2a3.6 3.6 0 1 1-3.6-3.6" fill="none" stroke="#25f4ee" stroke-width="3.2" transform="translate(-0.8,-0.6)"/><path d="M11.5 2c.6 2.6 2.4 4.3 5 4.6" fill="none" stroke="#25f4ee" stroke-width="3.2" transform="translate(-0.8,-0.6)"/><path d="M11.5 2v12.2a3.6 3.6 0 1 1-3.6-3.6" fill="none" stroke="#fe2c55" stroke-width="3.2" transform="translate(0.8,0.6)"/><path d="M11.5 2c.6 2.6 2.4 4.3 5 4.6" fill="none" stroke="#fe2c55" stroke-width="3.2" transform="translate(0.8,0.6)"/><path d="M11.5 2v12.2a3.6 3.6 0 1 1-3.6-3.6" fill="none" stroke="#000" stroke-width="3.2"/><path d="M11.5 2c.6 2.6 2.4 4.3 5 4.6" fill="none" stroke="#000" stroke-width="3.2"/></svg><div style="position:absolute;left:54px;top:66.5px;width:22px;font-size:4.2px;line-height:1.0;color:#000;font-weight:700;text-align:center;white-space:nowrap;font-family:'Liberation Sans', sans-serif;">TikTok</div><div style="position:absolute;left:0px;top:76.5px;width:84px;font-size:3.2px;line-height:1.0;color:#111;font-weight:700;text-align:center;white-space:nowrap;font-family:'Liberation Sans', sans-serif;">Launch 100s of ads in 1 minute</div></div>
<div class="t" style="left:796.4px;top:1123.6px;font-size:26.5px;color:#131722;font-weight:400;font-family:'Liberation Sans', sans-serif;width:585px;overflow:hidden;-webkit-text-stroke:0.5px #131722;">AdManage_Statics_Creative 1 186803 mickael 11-</div>
<div class="t" style="left:1413.0px;top:1124.3px;font-size:27.5px;color:#2f3a4d;font-weight:400;font-family:'Liberation Mono', monospace;transform:scaleX(0.911);transform-origin:0 0;-webkit-text-stroke:0.3px #2f3a4d;">120244246353130456</div>
<div class="t" style="left:1782.0px;top:1124.2px;font-size:25.8px;color:#465063;font-weight:400;font-family:'Liberation Sans', sans-serif;width:413px;overflow:hidden;">AdManage Adset - November 15th - 1</div>
<div class="t" style="left:2226.0px;top:1124.3px;font-size:25.6px;color:#465063;font-weight:400;font-family:'Liberation Sans', sans-serif;">Testing Campaign Sales</div>
<div class="t" style="right:356.0px;top:1123.3px;font-size:26.5px;color:#111;font-weight:400;font-family:'Liberation Sans', sans-serif;-webkit-text-stroke:0.35px #111;">£0.00</div>
<svg style="position:absolute;left:3069px;top:1121.5px;" width="30" height="30" viewBox="0 0 24 24" fill="none" stroke="#4b5263" stroke-width="2" stroke-linecap="round" stroke-linejoin="round"><path d="M15 3h6v6"/><path d="M10 14 21 3"/><path d="M18 13v6a2 2 0 0 1-2 2H5a2 2 0 0 1-2-2V8a2 2 0 0 1 2-2h6"/></svg>
<svg style="position:absolute;left:3243px;top:1123.0px;" width="27" height="27" viewBox="0 0 24 24" fill="none" stroke="#6b707c" stroke-width="1.7" stroke-linecap="round" stroke-linejoin="round"><path d="M17 3a2.85 2.83 0 1 1 4 4L7.5 20.5 2 22l1.5-5.5Z"/></svg>
<div style="position:absolute;left:322px;top:1202.5px;width:3014px;height:128px;background:#f6f6f8;"></div>
<div style="position:absolute;left:322px;top:1330.0px;width:3014px;height:2px;background:#c9ced9;"></div>
<div style="position:absolute;left:351px;top:1247.0px;width:32.5px;height:32.5px;border:1.5px solid #dcdde1;border-radius:10px;box-sizing:border-box;background:#fff;"></div>
<div style="position:absolute;left:466px;top:1248.5px;width:58px;height:36px;background:#4361e6;border-radius:18px;"></div>
<div style="position:absolute;left:491.2px;top:1252.3px;width:29px;height:29px;background:#fff;border-radius:50%;box-shadow:0 26px 22px -2px rgba(0,0,0,0.045);"></div>
<div style="position:absolute;left:626px;top:1224.8px;width:84px;height:84px;border-radius:9px;overflow:hidden;background:radial-gradient(ellipse at 50% 48%,#050418 0%,#15104a 35%,#2c2396 75%,#3a2fb0 100%);"><div style="position:absolute;left:6px;top:-4px;width:72.5px;height:25.3px;background:#fff;border-radius:0 0 6px 6px;"></div><div style="position:absolute;left:0px;top:0.8px;width:84px;font-size:8.4px;line-height:1.0;color:#221c6e;font-weight:700;text-align:center;white-space:nowrap;font-family:'Liberation Sans', sans-serif;letter-spacing:0.2px;">Automate Your</div><div style="position:absolute;left:0px;top:10.6px;width:84px;font-size:8.4px;line-height:1.0;color:#221c6e;font-weight:700;text-align:center;white-space:nowrap;font-family:'Liberation Sans', sans-serif;letter-spacing:0.2px;">Ad Workflows</div><div style="position:absolute;left:0px;top:33.5px;width:84px;font-size:3.6px;line-height:1.0;color:#e8e8f0;font-weight:700;text-align:center;white-space:nowrap;font-family:'Liberation Sans', sans-serif;">Connect &nbsp;Your &nbsp;Storage</div><div style="position:absolute;left:8px;top:45px;width:36px;font-size:5px;line-height:1.0;color:#fff;font-weight:700;text-align:left;white-space:nowrap;font-family:'Liberation Sans', sans-serif;">⁞ frame.io</div><div style="position:absolute;left:46px;top:45px;width:36px;font-size:5.6px;line-height:1.0;color:#fff;font-weight:700;text-align:left;white-space:nowrap;font-family:'Liberation Sans', sans-serif;">❖ Dropbox</div><div style="position:absolute;left:8px;top:60px;width:40px;font-size:4.2px;line-height:1.0;color:#eee;font-weight:700;text-align:left;white-space:nowrap;font-family:'Liberation Sans', sans-serif;">▲ Google Drive</div><div style="position:absolute;left:48px;top:59.5px;width:20px;font-size:5.4px;line-height:1.0;color:#fff;font-weight:700;text-align:left;white-space:nowrap;font-family:'Liberation Sans', sans-serif;">box</div><div style="position:absolute;left:64px;top:60px;width:20px;font-size:4.5px;line-height:1.0;color:#fff;font-weight:700;text-align:left;white-space:nowrap;font-family:'Liberation Sans', sans-serif;">☁</div><div style="position:absolute;left:0px;top:78px;width:84px;font-size:4.5px;line-height:1.0;color:#ddd;font-weight:700;text-align:center;white-space:nowrap;font-family:'Liberation Sans', sans-serif;">⌂ Admanage.ai</div></div>
<div class="t" style="left:796.4px;top:1253.1px;font-size:26.5px;color:#131722;font-weight:400;font-family:'Liberation Sans', sans-serif;width:585px;overflow:hidden;-webkit-text-stroke:0.5px #131722;">AdManage_Statics_Creative 6 186811 mickael 11-</div>
<div class="t" style="left:1413.0px;top:1253.8px;font-size:27.5px;color:#2f3a4d;font-weight:400;font-family:'Liberation Mono', monospace;transform:scaleX(0.911);transform-origin:0 0;-webkit-text-stroke:0.3px #2f3a4d;">120244246354030456</div>
<div class="t" style="left:1782.0px;top:1253.7px;font-size:25.8px;color:#465063;font-weight:400;font-family:'Liberation Sans', sans-serif;width:413px;overflow:hidden;">AdManage Adset - November 15th - 1</div>
<div class="t" style="left:2226.0px;top:1253.8px;font-size:25.6px;color:#465063;font-weight:400;font-family:'Liberation Sans', sans-serif;">Testing Campaign Sales</div>
<div class="t" style="right:356.0px;top:1252.8px;font-size:26.5px;color:#111;font-weight:400;font-family:'Liberation Sans', sans-serif;-webkit-text-stroke:0.35px #111;">£0.00</div>
<svg style="position:absolute;left:3069px;top:1251.0px;" width="30" height="30" viewBox="0 0 24 24" fill="none" stroke="#4b5263" stroke-width="2" stroke-linecap="round" stroke-linejoin="round"><path d="M15 3h6v6"/><path d="M10 14 21 3"/><path d="M18 13v6a2 2 0 0 1-2 2H5a2 2 0 0 1-2-2V8a2 2 0 0 1 2-2h6"/></svg>
<svg style="position:absolute;left:3243px;top:1252.5px;" width="27" height="27" viewBox="0 0 24 24" fill="none" stroke="#6b707c" stroke-width="1.7" stroke-linecap="round" stroke-linejoin="round"><path d="M17 3a2.85 2.83 0 1 1 4 4L7.5 20.5 2 22l1.5-5.5Z"/></svg>
<div style="position:absolute;left:322px;top:1332.0px;width:3014px;height:128px;background:#f9fafb;"></div>
<div style="position:absolute;left:322px;top:1459.5px;width:3014px;height:2px;background:#c9ced9;"></div>
<div style="position:absolute;left:351px;top:1376.5px;width:32.5px;height:32.5px;border:1.5px solid #dcdde1;border-radius:10px;box-sizing:border-box;background:#fff;"></div>
<div style="position:absolute;left:466px;top:1378.0px;width:58px;height:36px;background:#4361e6;border-radius:18px;"></div>
<div style="position:absolute;left:491.2px;top:1381.8px;width:29px;height:29px;background:#fff;border-radius:50%;box-shadow:0 26px 22px -2px rgba(0,0,0,0.045);"></div>
<div style="position:absolute;left:626px;top:1354.3px;width:84px;height:84px;border-radius:9px;overflow:hidden;background:radial-gradient(ellipse at 50% 48%,#0c1c20 0%,#1f4f52 35%,#3a9a98 75%,#4ec8c0 100%);"><div style="position:absolute;left:6px;top:-2px;width:72.5px;height:37px;background:#fff;border-radius:0 0 7px 7px;"></div><div style="position:absolute;left:0px;top:1.2px;width:84px;font-size:8.2px;line-height:1.0;color:#1a4448;font-weight:700;text-align:center;white-space:nowrap;font-family:'Liberation Sans', sans-serif;letter-spacing:0.2px;">Free Your Team</div><div style="position:absolute;left:0px;top:10.2px;width:84px;font-size:8.2px;line-height:1.0;color:#1a4448;font-weight:700;text-align:center;white-space:nowrap;font-family:'Liberation Sans', sans-serif;letter-spacing:0.2px;">From Repetitive</div><div style="position:absolute;left:0px;top:19.2px;width:84px;font-size:8.2px;line-height:1.0;color:#1a4448;font-weight:700;text-align:center;white-space:nowrap;font-family:'Liberation Sans', sans-serif;letter-spacing:0.2px;">Uploads.</div><div style="position:absolute;left:0px;top:39px;width:84px;font-size:8px;line-height:1.0;color:#f0f4f4;font-weight:700;text-align:center;white-space:nowrap;font-family:'Liberation Sans', sans-serif;">⌃ Admanage.ai</div><div style="position:absolute;left:6px;top:60px;width:72.5px;height:30px;background:#fff;border-radius:7px;"></div><div style="position:absolute;left:0px;top:63.5px;width:84px;font-size:8.2px;line-height:1.0;color:#1a4448;font-weight:700;text-align:center;white-space:nowrap;font-family:'Liberation Sans', sans-serif;letter-spacing:0.2px;">Let Them Focus</div><div style="position:absolute;left:0px;top:73px;width:84px;font-size:8.2px;line-height:1.0;color:#1a4448;font-weight:700;text-align:center;white-space:nowrap;font-family:'Liberation Sans', sans-serif;letter-spacing:0.2px;">On Growth</div></div>
<div class="t" style="left:796.4px;top:1382.6px;font-size:26.5px;color:#131722;font-weight:400;font-family:'Liberation Sans', sans-serif;width:585px;overflow:hidden;-webkit-text-stroke:0.5px #131722;">AdManage_Statics_Creative 3-186807-NewCreat</div>
<div class="t" style="left:1413.0px;top:1383.3px;font-size:27.5px;color:#2f3a4d;font-weight:400;font-family:'Liberation Mono', monospace;transform:scaleX(0.911);transform-origin:0 0;-webkit-text-stroke:0.3px #2f3a4d;">120244310924480456</div>
<div class="t" style="left:1782.0px;top:1383.2px;font-size:25.8px;color:#465063;font-weight:400;font-family:'Liberation Sans', sans-serif;width:413px;overflow:hidden;">AdManage Adset - Template - copy: 1</div>
<div class="t" style="left:2226.0px;top:1383.3px;font-size:25.6px;color:#465063;font-weight:400;font-family:'Liberation Sans', sans-serif;">Testing Campaign Sales</div>
<div class="t" style="right:356.0px;top:1382.3px;font-size:26.5px;color:#111;font-weight:400;font-family:'Liberation Sans', sans-serif;-webkit-text-stroke:0.35px #111;">£0.00</div>
<svg style="position:absolute;left:3069px;top:1380.5px;" width="30" height="30" viewBox="0 0 24 24" fill="none" stroke="#4b5263" stroke-width="2" stroke-linecap="round" stroke-linejoin="round"><path d="M15 3h6v6"/><path d="M10 14 21 3"/><path d="M18 13v6a2 2 0 0 1-2 2H5a2 2 0 0 1-2-2V8a2 2 0 0 1 2-2h6"/></svg>
<svg style="position:absolute;left:3243px;top:1382.0px;" width="27" height="27" viewBox="0 0 24 24" fill="none" stroke="#6b707c" stroke-width="1.7" stroke-linecap="round" stroke-linejoin="round"><path d="M17 3a2.85 2.83 0 1 1 4 4L7.5 20.5 2 22l1.5-5.5Z"/></svg>
<div style="position:absolute;left:322px;top:1461.5px;width:3014px;height:128px;background:#f6f6f8;"></div>
<div style="position:absolute;left:322px;top:1589.0px;width:3014px;height:2px;background:#c9ced9;"></div>
<div style="position:absolute;left:351px;top:1506.0px;width:32.5px;height:32.5px;border:1.5px solid #dcdde1;border-radius:10px;box-sizing:border-box;background:#fff;"></div>
<div style="position:absolute;left:466px;top:1507.5px;width:58px;height:36px;background:#4361e6;border-radius:18px;"></div>
<div style="position:absolute;left:491.2px;top:1511.3px;width:29px;height:29px;background:#fff;border-radius:50%;box-shadow:0 26px 22px -2px rgba(0,0,0,0.045);"></div>
<div style="position:absolute;left:626px;top:1483.8px;width:84px;height:84px;border-radius:9px;overflow:hidden;background:#cfd1d2;"><div style="position:absolute;left:0;top:0;width:84px;height:12px;background:linear-gradient(90deg,#7a5434,#a07850 40%,#d8c8b0 70%,#e8d8b8);"></div><div style="position:absolute;left:74px;top:0;width:10px;height:42px;background:#e8b860;"></div><div style="position:absolute;left:60px;top:10px;width:18px;height:10px;background:#e0e6ea;"></div><div style="position:absolute;left:0;top:4px;width:60px;height:80px;background:linear-gradient(180deg,#d0d2d3,#dcdedf 60%,#d2d4d5);clip-path:polygon(0 5%,100% 15%,100% 100%,0 100%);"></div><div style="position:absolute;left:10px;top:38px;width:24px;height:20px;background:radial-gradient(circle,#333 0.8px,transparent 1.2px) 0 0/4px 4px;opacity:0.75;"></div><div style="position:absolute;left:46px;top:45px;width:8px;height:8px;background:radial-gradient(circle,#222 1px,transparent 1.5px) 0 0/4px 4px;opacity:0.8;"></div><div style="position:absolute;left:60px;top:16.5px;width:11px;height:14px;background:#4a3428;border-radius:45%;"></div><div style="position:absolute;left:57px;top:37px;width:27px;height:47px;background:#141416;border-radius:7px 6px 0 0;"></div><div style="position:absolute;left:58px;top:72px;width:26px;height:12px;background:#3a3a3e;"></div><div style="position:absolute;left:51px;top:58px;width:8px;height:5px;background:#8a6248;border-radius:40%;"></div></div>
<div class="t" style="left:796.4px;top:1512.1px;font-size:26.5px;color:#131722;font-weight:400;font-family:'Liberation Sans', sans-serif;width:585px;overflow:hidden;-webkit-text-stroke:0.5px #131722;">IMG_9280</div>
<div class="t" style="left:1413.0px;top:1512.8px;font-size:27.5px;color:#2f3a4d;font-weight:400;font-family:'Liberation Mono', monospace;transform:scaleX(0.911);transform-origin:0 0;-webkit-text-stroke:0.3px #2f3a4d;">120244323314440456</div>
<div class="t" style="left:1782.0px;top:1512.7px;font-size:25.8px;color:#465063;font-weight:400;font-family:'Liberation Sans', sans-serif;width:413px;overflow:hidden;">AdManage Adset - Template - copy: 1</div>
<div class="t" style="left:2226.0px;top:1512.8px;font-size:25.6px;color:#465063;font-weight:400;font-family:'Liberation Sans', sans-serif;">Testing Campaign Sales</div>
<div class="t" style="right:356.0px;top:1511.8px;font-size:26.5px;color:#111;font-weight:400;font-family:'Liberation Sans', sans-serif;-webkit-text-stroke:0.35px #111;">£0.00</div>
<svg style="position:absolute;left:3069px;top:1510.0px;" width="30" height="30" viewBox="0 0 24 24" fill="none" stroke="#4b5263" stroke-width="2" stroke-linecap="round" stroke-linejoin="round"><path d="M15 3h6v6"/><path d="M10 14 21 3"/><path d="M18 13v6a2 2 0 0 1-2 2H5a2 2 0 0 1-2-2V8a2 2 0 0 1 2-2h6"/></svg>
<svg style="position:absolute;left:3243px;top:1511.5px;" width="27" height="27" viewBox="0 0 24 24" fill="none" stroke="#6b707c" stroke-width="1.7" stroke-linecap="round" stroke-linejoin="round"><path d="M17 3a2.85 2.83 0 1 1 4 4L7.5 20.5 2 22l1.5-5.5Z"/></svg>
<div style="position:absolute;left:322px;top:1591.0px;width:3014px;height:128px;background:#f9fafb;"></div>
<div style="position:absolute;left:351px;top:1635.5px;width:32.5px;height:32.5px;border:1.5px solid #dcdde1;border-radius:10px;box-sizing:border-box;background:#fff;"></div>
<div style="position:absolute;left:466px;top:1637.0px;width:58px;height:36px;background:#4361e6;border-radius:18px;"></div>
<div style="position:absolute;left:491.2px;top:1640.8px;width:29px;height:29px;background:#fff;border-radius:50%;box-shadow:0 26px 22px -2px rgba(0,0,0,0.045);"></div>
<div style="position:absolute;left:626px;top:1613.3px;width:84px;height:84px;border-radius:9px;overflow:hidden;background:radial-gradient(ellipse at 50% 45%,#fdf3a0 0%,#fbe0c0 35%,#f8c8e4 70%,#f6b8ec 100%);"><div style="position:absolute;left:4.5px;top:-4px;width:75.5px;height:45px;background:#fff;border-radius:0 0 7px 7px;"></div><div style="position:absolute;left:0px;top:-2px;width:84px;font-size:7.2px;line-height:1.0;color:#b04ab0;font-weight:700;text-align:center;white-space:nowrap;font-family:'Liberation Sans', sans-serif;">98%</div><div style="position:absolute;left:0px;top:8px;width:84px;font-size:7.2px;line-height:1.0;color:#b04ab0;font-weight:700;text-align:center;white-space:nowrap;font-family:'Liberation Sans', sans-serif;letter-spacing:0.3px;">Reduction</div><div style="position:absolute;left:0px;top:18px;width:84px;font-size:7.2px;line-height:1.0;color:#b04ab0;font-weight:700;text-align:center;white-space:nowrap;font-family:'Liberation Sans', sans-serif;letter-spacing:0.3px;">in Ad</div><div style="position:absolute;left:0px;top:28px;width:84px;font-size:7.2px;line-height:1.0;color:#b04ab0;font-weight:700;text-align:center;white-space:nowrap;font-family:'Liberation Sans', sans-serif;letter-spacing:0.1px;">Launching Time</div><svg style="position:absolute;left:18px;top:47px" width="20" height="22" viewBox="0 0 20 22"><path d="M11.5 2v12.2a3.6 3.6 0 1 1-3.6-3.6" fill="none" stroke="#25f4ee" stroke-width="3.2" transform="translate(-0.8,-0.6)"/><path d="M11.5 2c.6 2.6 2.4 4.3 5 4.6" fill="none" stroke="#25f4ee" stroke-width="3.2" transform="translate(-0.8,-0.6)"/><path d="M11.5 2v12.2a3.6 3.6 0 1 1-3.6-3.6" fill="none" stroke="#fe2c55" stroke-width="3.2" transform="translate(0.8,0.6)"/><path d="M11.5 2c.6 2.6 2.4 4.3 5 4.6" fill="none" stroke="#fe2c55" stroke-width="3.2" transform="translate(0.8,0.6)"/><path d="M11.5 2v12.2a3.6 3.6 0 1 1-3.6-3.6" fill="none" stroke="#000" stroke-width="3.2"/><path d="M11.5 2c.6 2.6 2.4 4.3 5 4.6" fill="none" stroke="#000" stroke-width="3.2"/></svg><div style="position:absolute;left:4px;top:70px;width:38px;font-size:8.2px;line-height:1.0;color:#000;font-weight:700;text-align:center;white-space:nowrap;font-family:'Liberation Sans', sans-serif;">TikTok</div><svg style="position:absolute;left:44px;top:49px" width="30" height="21" viewBox="0 0 29 21"><path d="M8.5 3.5C4.8 3.5 2.5 8.5 2.5 13c0 2.6 1.3 4.5 3.6 4.5 2.8 0 4.6-2.6 7.4-7.3 2.6-4.4 4.4-6.7 7-6.7 3.3 0 5.5 4.6 5.5 9 0 2.9-1.3 5-3.6 5-2.6 0-4.3-2.3-7.2-7.2C12.8 5.8 11.2 3.5 8.5 3.5Z" fill="none" stroke="#2166e8" stroke-width="3.4"/></svg><div style="position:absolute;left:42px;top:69.5px;width:34px;font-size:9.2px;line-height:1.0;color:#0c2230;font-weight:400;text-align:center;white-space:nowrap;font-family:'Liberation Sans', sans-serif;">Meta</div></div>
<div class="t" style="left:796.4px;top:1641.6px;font-size:26.5px;color:#131722;font-weight:400;font-family:'Liberation Sans', sans-serif;width:585px;overflow:hidden;-webkit-text-stroke:0.5px #131722;">AdManage_Statics_Creative 2-186805-NewCreat</div>
<div class="t" style="left:1413.0px;top:1642.3px;font-size:27.5px;color:#2f3a4d;font-weight:400;font-family:'Liberation Mono', monospace;transform:scaleX(0.911);transform-origin:0 0;-webkit-text-stroke:0.3px #2f3a4d;">120244439009140456</div>
<div class="t" style="left:1782.0px;top:1642.2px;font-size:25.8px;color:#465063;font-weight:400;font-family:'Liberation Sans', sans-serif;width:413px;overflow:hidden;">AdManage Adset - This is the new ad set</div>
<div class="t" style="left:2226.0px;top:1642.3px;font-size:25.6px;color:#465063;font-weight:400;font-family:'Liberation Sans', sans-serif;">Testing Campaign Sales</div>
<div class="t" style="right:356.0px;top:1641.3px;font-size:26.5px;color:#111;font-weight:400;font-family:'Liberation Sans', sans-serif;-webkit-text-stroke:0.35px #111;">£0.00</div>
<svg style="position:absolute;left:3069px;top:1639.5px;" width="30" height="30" viewBox="0 0 24 24" fill="none" stroke="#4b5263" stroke-width="2" stroke-linecap="round" stroke-linejoin="round"><path d="M15 3h6v6"/><path d="M10 14 21 3"/><path d="M18 13v6a2 2 0 0 1-2 2H5a2 2 0 0 1-2-2V8a2 2 0 0 1 2-2h6"/></svg>
<svg style="position:absolute;left:3243px;top:1641.0px;" width="27" height="27" viewBox="0 0 24 24" fill="none" stroke="#6b707c" stroke-width="1.7" stroke-linecap="round" stroke-linejoin="round"><path d="M17 3a2.85 2.83 0 1 1 4 4L7.5 20.5 2 22l1.5-5.5Z"/></svg>
<div style="position:absolute;left:322px;top:1715px;width:3014px;height:1.2px;background:#e2e4e8;"></div>
<div style="position:absolute;left:322px;top:1716px;width:3014px;height:80px;background:#f1f2f4;border-radius:0 0 0 14px;"></div>
<div style="position:absolute;left:322px;top:1796px;width:3014px;height:2.5px;background:#e3e5e9;"></div>
<div class="t" style="left:352.0px;top:1744.3px;font-size:24.5px;color:#939cac;font-weight:700;font-family:'Liberation Sans', sans-serif;">Total</div>
<div style="position:absolute;left:484.6px;top:1756.5px;width:20.5px;height:2px;background:#a0a8b8;"></div>
<div style="position:absolute;left:657px;top:1756.5px;width:20.5px;height:2px;background:#a0a8b8;"></div>
<div style="position:absolute;left:1064px;top:1756.5px;width:20.5px;height:2px;background:#a0a8b8;"></div>
<div style="position:absolute;left:1556px;top:1756.5px;width:20.5px;height:2px;background:#a0a8b8;"></div>
<div style="position:absolute;left:1963px;top:1756.5px;width:20.5px;height:2px;background:#a0a8b8;"></div>
<div style="position:absolute;left:2407px;top:1756.5px;width:20.5px;height:2px;background:#a0a8b8;"></div>
<div style="position:absolute;left:3073.6px;top:1756.5px;width:20.5px;height:2px;background:#a0a8b8;"></div>
<div style="position:absolute;left:3246px;top:1756.5px;width:20.5px;height:2px;background:#a0a8b8;"></div>
<div class="t" style="right:356.0px;top:1742.6px;font-size:26.5px;color:#939cac;font-weight:400;font-family:'Liberation Sans', sans-serif;-webkit-text-stroke:0.35px #939cac;">£0.00</div>
<div class="t" style="left:366.0px;top:1850.7px;font-size:25.2px;color:#4b5060;font-weight:400;font-family:'Liberation Sans', sans-serif;">Rows per page</div>
<div style="position:absolute;left:555.5px;top:1838.5px;width:96px;height:49px;border:1.5px solid #e3e5e9;border-radius:12px;box-sizing:border-box;box-shadow:0 1px 2px rgba(0,0,0,0.06);"></div>
<div class="t" style="left:574.7px;top:1851.9px;font-size:23.8px;color:#131318;font-weight:400;font-family:'Liberation Sans', sans-serif;">20</div>
<svg style="position:absolute;left:611px;top:1850px;" width="24" height="24" viewBox="0 0 24 24" fill="none" stroke="#4b5060" stroke-width="2" stroke-linecap="round" stroke-linejoin="round"><path d="m6 9 6 6 6-6"/></svg>
<div class="t" style="left:2679.0px;top:1849.9px;font-size:26.1px;color:#4b5060;font-weight:400;font-family:'Liberation Sans', sans-serif;">1 - 20 of 1645</div>
<svg style="position:absolute;left:2869.5px;top:1849.5px;" width="27" height="27" viewBox="0 0 24 24" fill="none" stroke="#8b8e98" stroke-width="1.7" stroke-linecap="round" stroke-linejoin="round"><path d="m15 18-6-6 6-6"/></svg>
<div style="position:absolute;left:2917.2px;top:1838.4px;width:49.5px;height:49.5px;background:#edf1fc;border-radius:11px;"></div>
<div class="t" style="left:2741.8px;width:400px;text-align:center;top:1850.0px;font-size:26px;color:#131318;font-weight:400;font-family:'Liberation Sans', sans-serif;">1</div>
<div class="t" style="left:2800.0px;width:400px;text-align:center;top:1850.0px;font-size:26px;color:#3c4150;font-weight:400;font-family:'Liberation Sans', sans-serif;">2</div>
<div class="t" style="left:2857.0px;width:400px;text-align:center;top:1850.0px;font-size:26px;color:#3c4150;font-weight:400;font-family:'Liberation Sans', sans-serif;">3</div>
<div class="t" style="left:2914.7px;width:400px;text-align:center;top:1850.0px;font-size:26px;color:#3c4150;font-weight:400;font-family:'Liberation Sans', sans-serif;">4</div>
<div class="t" style="left:2972.5px;width:400px;text-align:center;top:1850.0px;font-size:26px;color:#3c4150;font-weight:400;font-family:'Liberation Sans', sans-serif;">5</div>
<div class="t" style="left:3030.0px;width:400px;text-align:center;top:1850.0px;font-size:26px;color:#3c4150;font-weight:400;font-family:'Liberation Sans', sans-serif;">...</div>
<div style="position:absolute;left:3245.6px;top:1813.4px;width:80.8px;height:80.8px;background:#4361e8;border-radius:50%;"></div>
<svg style="position:absolute;left:3262px;top:1828px" width="50" height="54" viewBox="0 0 50 54"><circle cx="24" cy="24.3" r="20.2" fill="#effdff"/><path d="M20 42 L33.8 50.8 L33.8 37 Z" fill="#effdff"/><path d="M13.6 13.4H23.7M9.4 21H23.7M9.6 29H23.7" stroke="#4361ee" stroke-width="4.1" stroke-linecap="round"/></svg>
<div style="position:absolute;left:291.5px;top:1582px;width:57px;height:57px;background:#182745;border-radius:50%;box-shadow:0 2px 6px rgba(0,0,0,0.18);"></div>
<svg style="position:absolute;left:306px;top:1596px;" width="28" height="28" viewBox="0 0 24 24" fill="none" stroke="#fff" stroke-width="2.2" stroke-linecap="round" stroke-linejoin="round"><path d="m15 18-6-6 6-6"/></svg>
</body></html>
